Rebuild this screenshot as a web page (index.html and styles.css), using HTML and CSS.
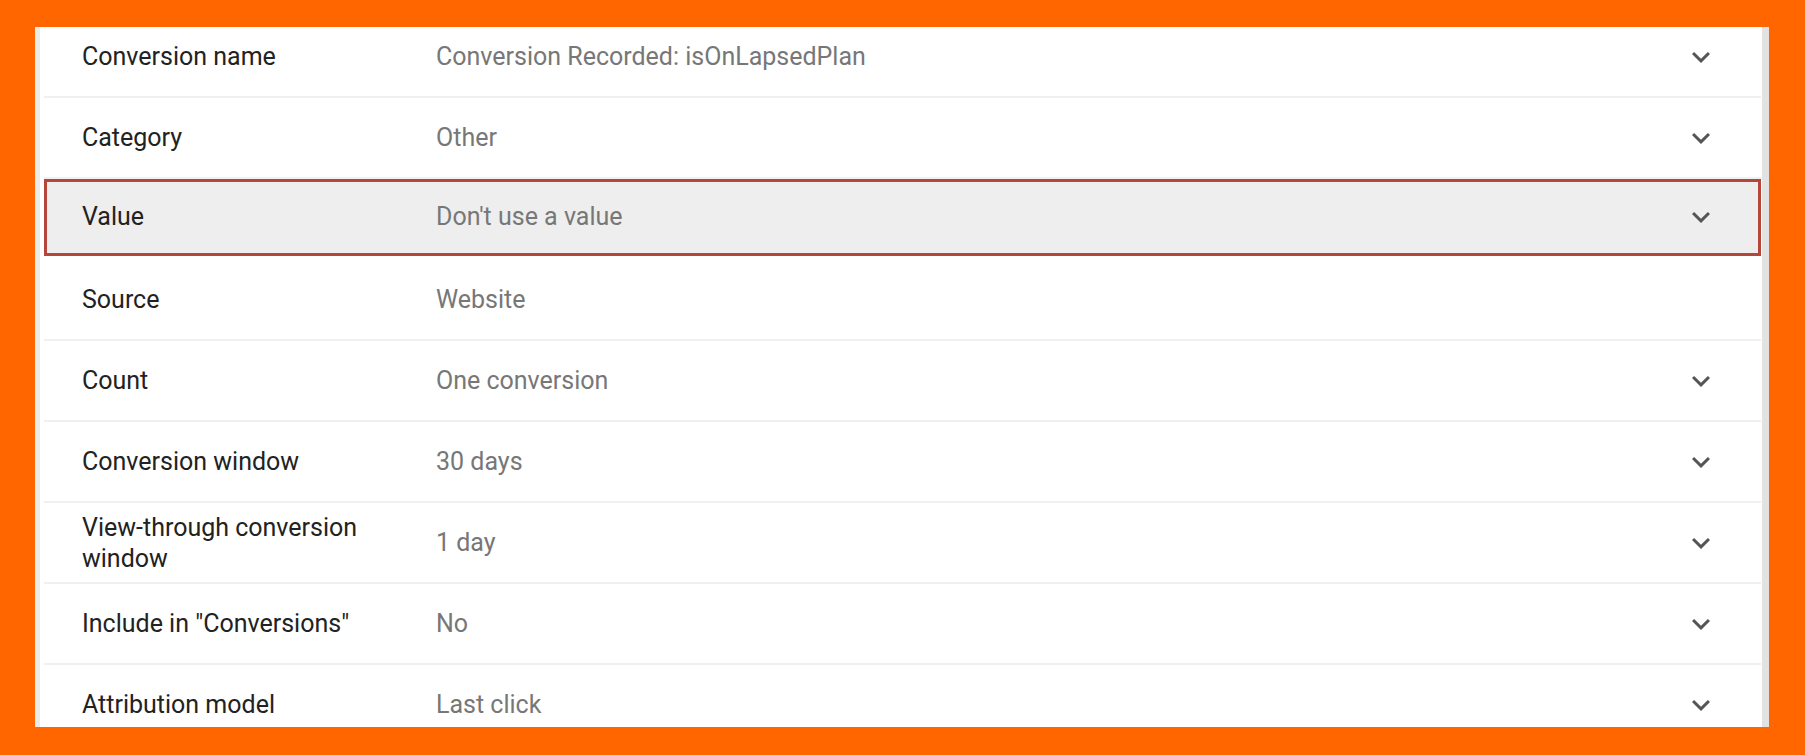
FILE: index.html
```html
<!DOCTYPE html>
<html lang="en">
<head>
    <meta charset="UTF-8">
    <meta name="viewport" content="width=device-width, initial-scale=1.0">
    <title>Conversion settings</title>
    <link rel="stylesheet" href="styles.css">
</head>
<body>
    <div class="panel">
        <div class="settings">
            <div class="row">
                <div class="label">Conversion name</div>
                <div class="value">Conversion Recorded: isOnLapsedPlan</div>
                <div class="toggle"><svg viewBox="0 0 24 24"><path d="M16.59 8.59L12 13.17 7.41 8.59 6 10l6 6 6-6z"/></svg></div>
            </div>
            <div class="row">
                <div class="label">Category</div>
                <div class="value">Other</div>
                <div class="toggle"><svg viewBox="0 0 24 24"><path d="M16.59 8.59L12 13.17 7.41 8.59 6 10l6 6 6-6z"/></svg></div>
            </div>
            <div class="row active">
                <div class="label">Value</div>
                <div class="value">Don't use a value</div>
                <div class="toggle"><svg viewBox="0 0 24 24"><path d="M16.59 8.59L12 13.17 7.41 8.59 6 10l6 6 6-6z"/></svg></div>
            </div>
            <div class="row">
                <div class="label">Source</div>
                <div class="value">Website</div>
                <div class="toggle"></div>
            </div>
            <div class="row">
                <div class="label">Count</div>
                <div class="value">One conversion</div>
                <div class="toggle"><svg viewBox="0 0 24 24"><path d="M16.59 8.59L12 13.17 7.41 8.59 6 10l6 6 6-6z"/></svg></div>
            </div>
            <div class="row">
                <div class="label">Conversion window</div>
                <div class="value">30 days</div>
                <div class="toggle"><svg viewBox="0 0 24 24"><path d="M16.59 8.59L12 13.17 7.41 8.59 6 10l6 6 6-6z"/></svg></div>
            </div>
            <div class="row">
                <div class="label">View-through conversion window</div>
                <div class="value">1 day</div>
                <div class="toggle"><svg viewBox="0 0 24 24"><path d="M16.59 8.59L12 13.17 7.41 8.59 6 10l6 6 6-6z"/></svg></div>
            </div>
            <div class="row">
                <div class="label">Include in "Conversions"</div>
                <div class="value">No</div>
                <div class="toggle"><svg viewBox="0 0 24 24"><path d="M16.59 8.59L12 13.17 7.41 8.59 6 10l6 6 6-6z"/></svg></div>
            </div>
            <div class="row">
                <div class="label">Attribution model</div>
                <div class="value">Last click</div>
                <div class="toggle"><svg viewBox="0 0 24 24"><path d="M16.59 8.59L12 13.17 7.41 8.59 6 10l6 6 6-6z"/></svg></div>
            </div>
        </div>
    </div>
</body>
</html>
```

FILE: styles.css
```css
body {
    margin: 0;
    background: #ff6600;
    font-family: Roboto, "Liberation Sans", sans-serif;
}
.panel {
    margin: 27px 36px 0 35px;
    height: 700px;
    overflow: hidden;
    background: #fff;
    border-left: 5px solid #ebebeb;
    border-right: 7px solid #e2e2e2;
}
.settings {
    margin-top: -10px;
}
.row {
    display: grid;
    grid-template-columns: 354px 1fr 36px;
    align-items: center;
    height: 79px;
    margin: 0 1px 0 4px;
    padding: 0 42px 0 38px;
    border-bottom: 2px solid #f0f0f0;
}
.row.active {
    height: 75px;
    margin-bottom: 4px;
    background: #eeeeee;
    outline: 3px solid #b5463b;
    outline-offset: -3px;
}
.label {
    font-size: 25px;
    line-height: 31px;
    color: #222;
    padding-right: 20px;
}
.value {
    font-size: 25px;
    color: #777;
}
.toggle {
    display: flex;
    justify-content: center;
}
.toggle svg {
    width: 36px;
    height: 36px;
    fill: #555;
}
```
